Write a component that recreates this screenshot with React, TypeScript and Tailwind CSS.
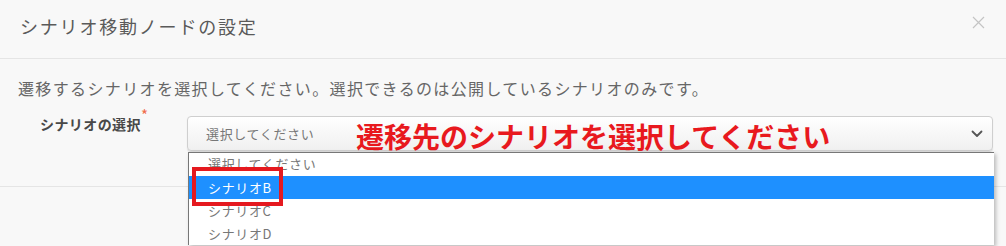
const options = [
  { label: "選択してください", selected: false },
  { label: "シナリオB", selected: true },
  { label: "シナリオC", selected: false },
  { label: "シナリオD", selected: false },
];

function ChevronDown() {
  return (
    <svg width="12" height="8" viewBox="0 0 12 8" fill="none">
      <path d="M1.5 1.5 6 6l4.5-4.5" stroke="#555" strokeWidth="1.8" strokeLinecap="round" strokeLinejoin="round" />
    </svg>
  );
}

function CloseIcon() {
  return (
    <svg width="13" height="13" viewBox="0 0 13 13" fill="none">
      <path d="M1 1l11 11M12 1 1 12" stroke="#c4c4c4" strokeWidth="1.2" />
    </svg>
  );
}

export default function App() {
  return (
    <div className="w-[1006px] h-[246px] overflow-hidden bg-[#f8f8f8] font-['Noto_Sans_CJK_JP','Noto_Sans',sans-serif] text-[#666]">
      {/* header */}
      <div className="h-[59px] px-5 pb-[5px] flex items-center justify-between border-b border-[#e5e5e5]">
        <h1 className="text-[18px] tracking-[0.1em] text-[#5a5a5a]">シナリオ移動ノードの設定</h1>
        <button className="mr-[1px] mb-[8px]">
          <CloseIcon />
        </button>
      </div>

      {/* body */}
      <div className="px-5 pt-[18px] pb-[35px]">
        <p className="-ml-[2px] text-[16px] leading-[22px] tracking-[0.085em] text-[#666]">
          遷移するシナリオを選択してください。選択できるのは公開しているシナリオのみです。
        </p>
        <div className="mt-[17px] flex items-start">
          <div className="w-[167px] pl-5 -mt-[5px] relative">
            <span className="text-[14px] font-bold tracking-[0.03em] text-[#484848]">シナリオの選択</span>
            <span className="absolute left-[121px] -top-[6px] text-[15px] leading-[20px] text-[#f06a4a]">*</span>
          </div>
          <div className="relative flex-1 mr-[-7px]">
            <div className="h-[35px] flex items-center justify-between pl-[18px] pr-[9px] rounded-[4px] border border-[#cfcfcf] bg-gradient-to-b from-white to-[#f0f0f0] shadow-[0_1px_1px_rgba(0,0,0,0.12)]">
              <span className="text-[13px] tracking-[0.05em] text-[#777]">選択してください</span>
              <ChevronDown />
            </div>

            {/* annotation */}
            <span className="absolute left-[169px] top-[2px] text-[28px] leading-[36px] font-bold text-[#e8191e] whitespace-nowrap">
              遷移先のシナリオを選択してください
            </span>

            {/* open listbox */}
            <ul className="absolute left-[1px] top-[36px] w-[806px] bg-white border-t border-l border-[#777] shadow-[2px_2px_4px_rgba(0,0,0,0.25)] z-10">
              {options.map((o, i) => (
                <li
                  key={o.label}
                  className={`h-[23px] flex items-center pl-[19px] text-[13px] tracking-[0.05em] ${i === 0 ? "-mt-[2px] h-[25px]" : ""} ${
                    o.selected ? "bg-[#1e90ff] text-white" : "text-[#777]"
                  }`}
                >
                  {o.label}
                </li>
              ))}
            </ul>

            {/* highlight box */}
            <div className="absolute left-[5px] top-[51px] w-[91px] h-[39px] border-[4px] border-[#e5191f] z-20" />
          </div>
        </div>
      </div>
      <div className="border-t border-[#e5e5e5]" />
    </div>
  );
}
